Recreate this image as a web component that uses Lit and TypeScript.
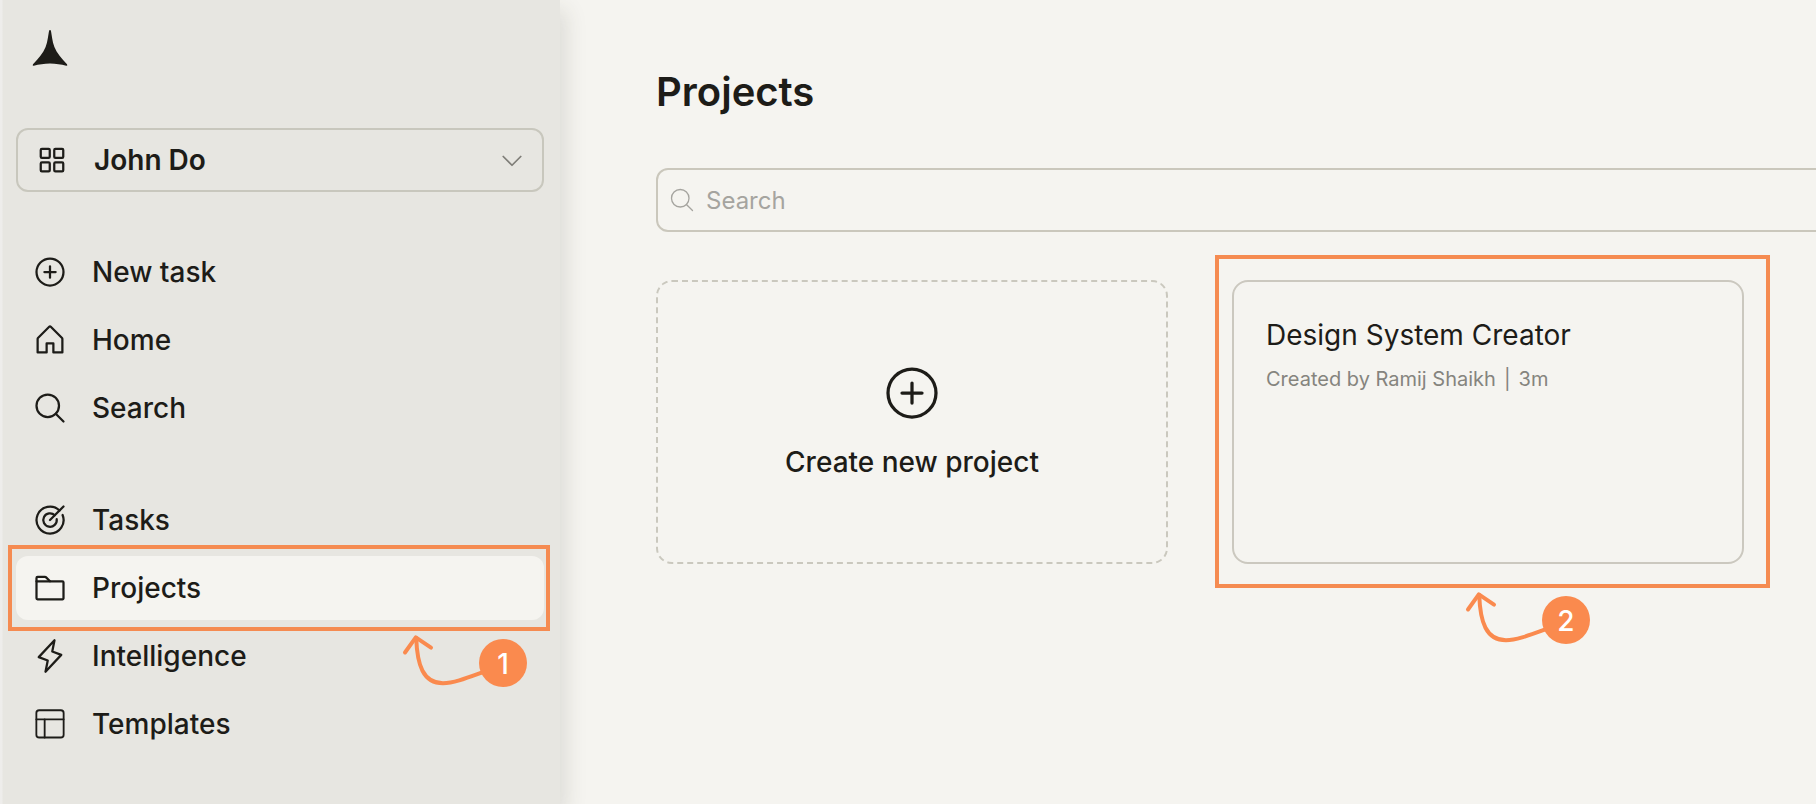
import { LitElement, html, svg, css, nothing } from "lit";
import type { SVGTemplateResult } from "lit";
import { customElement, property } from "lit/decorators.js";
import { classMap } from "lit/directives/class-map.js";

const icons: Record<string, SVGTemplateResult> = {
  squares: svg`
    <rect x="48" y="48" width="64" height="64" rx="8" />
    <rect x="144" y="48" width="64" height="64" rx="8" />
    <rect x="48" y="144" width="64" height="64" rx="8" />
    <rect x="144" y="144" width="64" height="64" rx="8" />`,
  caret: svg`<polyline points="208 96 128 176 48 96" />`,
  plus: svg`
    <circle cx="128" cy="128" r="96" />
    <line x1="88" y1="128" x2="168" y2="128" />
    <line x1="128" y1="88" x2="128" y2="168" />`,
  home: svg`<path d="M104,216V152h48v64h64V120a8,8,0,0,0-2.34-5.66l-80-80a8,8,0,0,0-11.32,0l-80,80A8,8,0,0,0,40,120v96Z" />`,
  search: svg`
    <circle cx="112" cy="112" r="80" />
    <line x1="168.57" y1="168.57" x2="224" y2="224" />`,
  target: svg`
    <line x1="128" y1="128" x2="224" y2="32" />
    <path d="M195.88,60.12A96,96,0,1,0,217.5,92.5" />
    <path d="M161.94,94.06A48,48,0,1,0,175.66,121.5" />`,
  folder: svg`
    <path d="M216.89,208H39.38A7.4,7.4,0,0,1,32,200.62V80H216a8,8,0,0,1,8,8V200.89A7.11,7.11,0,0,1,216.89,208Z" />
    <path d="M32,80V56a8,8,0,0,1,8-8H92.69a8,8,0,0,1,5.65,2.34L128,80" />`,
  bolt: svg`<polygon points="96 240 112 160 48 136 160 16 144 96 208 120 96 240" />`,
  template: svg`
    <rect x="31" y="30" width="194" height="194" rx="20" />
    <line x1="31" y1="95" x2="225" y2="95" />
    <line x1="90" y1="95" x2="90" y2="224" />`,
};

@customElement("line-icon")
export class LineIcon extends LitElement {
  @property() name = "plus";
  @property({ type: Number }) weight = 16;

  static styles = css`
    :host { display: block; flex: none; width: 36px; height: 36px; }
    svg {
      display: block; width: 100%; height: 100%; overflow: visible;
      fill: none; stroke: currentColor;
      stroke-linecap: round; stroke-linejoin: round;
    }
  `;

  render() {
    return html`<svg viewBox="0 0 256 256" stroke-width=${this.weight}>${icons[this.name]}</svg>`;
  }
}

@customElement("step-callout")
export class StepCallout extends LitElement {
  @property() step = "1";

  static styles = css`
    :host { position: relative; display: block; width: 124px; height: 52px; }
    svg {
      position: absolute; left: 0; top: 0; overflow: visible;
      fill: none; stroke: #fa8a4e; stroke-width: 4;
      stroke-linecap: round; stroke-linejoin: round;
    }
    .badge {
      position: absolute; right: 0; top: 4px; width: 48px; height: 48px;
      border-radius: 50%; background: #fa8a4e; color: #fff;
      font: 500 28px/50px Inter, sans-serif; text-align: center;
    }
  `;

  render() {
    return html`
      <svg width="124" height="52" viewBox="0 0 124 52">
        <path d="M2 17.5 L12.8 2.4 L28 12.6" />
        <path d="M13.2 3 C14.2 30 20 48.2 40 48.2 C51 48.2 64 43 82 36.5" />
      </svg>
      <div class="badge">${this.step}</div>
    `;
  }
}

interface NavItem { icon: string; label: string; active?: boolean; weight?: number; }

const groups: NavItem[][] = [
  [
    { icon: "plus", label: "New task" },
    { icon: "home", label: "Home" },
    { icon: "search", label: "Search" },
  ],
  [
    { icon: "target", label: "Tasks" },
    { icon: "folder", label: "Projects", active: true },
    { icon: "bolt", label: "Intelligence" },
    { icon: "template", label: "Templates", weight: 13 },
  ],
];

@customElement("app-root")
export class AppRoot extends LitElement {
  static styles = css`
    * { box-sizing: border-box; }
    :host {
      display: flex; width: 100%; height: 804px; overflow: hidden;
      background: #f5f4f0; color: #1d1c18;
      font-family: Inter, sans-serif; font-size: 28px; font-weight: 500;
    }
    .sidebar {
      flex: none; display: flex; flex-direction: column; gap: 48px;
      width: 560px; padding: 24px 16px 0 16px;
      background: linear-gradient(90deg, #eeedeb 0 2px, #e7e6e1 3px);
      box-shadow: 6px 10px 20px rgba(60, 58, 50, 0.13);
    }
    .logo { display: block; margin: 0 0 8px 12px; width: 44px; height: 48px; fill: #1d1c18; }
    .workspace {
      display: flex; align-items: center; gap: 24px; height: 64px; flex: none;
      padding: 0 16px; border: 2px solid #c8c7bd; border-radius: 12px;
      font-weight: 600;
    }
    .workspace .name { flex: 1; }
    .caret { width: 28px; height: 28px; color: #7f7e78; }
    .group { display: flex; flex-direction: column; gap: 4px; }
    .item {
      position: relative; display: flex; align-items: center; gap: 24px;
      height: 64px; padding: 0 16px; border-radius: 12px;
    }
    .item.active { background: #f5f4f0; }
    .frame { position: absolute; border: 4px solid #f58b51; }
    .item .frame { inset: -11px -6px -11px -8px; }
    .item step-callout { position: absolute; left: 387px; top: 79px; }
    main { flex: 1; min-width: 0; padding: 64px 0 0 96px; }
    h1 { margin: 0; font-size: 40px; line-height: 55px; font-weight: 600; }
    .field {
      display: flex; align-items: center; gap: 10px; height: 64px;
      margin: 49px -40px 48px 0; padding: 0 10px;
      border: 2px solid #cac7bc; border-radius: 12px;
      color: #a5a49f; font-size: 24px; font-weight: 400;
    }
    .field line-icon { width: 28px; height: 28px; }
    .cards { display: grid; grid-template-columns: 512px 512px; grid-auto-rows: 284px; gap: 64px; }
    .create {
      display: flex; flex-direction: column; align-items: center; gap: 20px;
      padding-top: 79px; border: 2px dashed #cac8be; border-radius: 16px;
    }
    .create line-icon { width: 64px; height: 64px; }
    .slot { position: relative; display: grid; }
    .slot .frame { inset: -25px -26px -24px -17px; }
    .slot step-callout { position: absolute; left: 234px; top: 312px; }
    .project { padding: 35px 32px; border: 2px solid #cbc8bf; border-radius: 16px; font-weight: 400; }
    .title { line-height: 36px; }
    .meta { display: flex; gap: 8px; margin-top: 12px; font-size: 20px; line-height: 28px; color: #85847e; }
  `;

  private renderItem(item: NavItem) {
    return html`
      <div class=${classMap({ item: true, active: !!item.active })}>
        <line-icon name=${item.icon} weight=${item.weight ?? 16}></line-icon>
        <span>${item.label}</span>
        ${item.active
          ? html`<div class="frame"></div><step-callout step="1"></step-callout>`
          : nothing}
      </div>
    `;
  }

  render() {
    return html`
      <aside class="sidebar">
        <svg class="logo" viewBox="28 24 44 48">
          <path d="M49.1 30.6 Q50 29.2 50.9 30.6 C51.8 35 52.2 41.5 54.4 47 C56.8 53 61.6 58.8 67 64.3 Q68 65.9 66.2 65.8 C61 64.6 56 63.6 50 63.6 C44 63.6 39 64.6 33.8 65.8 Q32 65.9 33 64.3 C38.4 58.8 43.2 53 45.6 47 C47.8 41.5 48.2 35 49.1 30.6 Z" />
        </svg>
        <div class="workspace">
          <line-icon name="squares"></line-icon>
          <span class="name">John Do</span>
          <line-icon class="caret" name="caret"></line-icon>
        </div>
        ${groups.map((g) => html`<nav class="group">${g.map((i) => this.renderItem(i))}</nav>`)}
      </aside>
      <main>
        <h1>Projects</h1>
        <div class="field">
          <line-icon name="search" weight="12"></line-icon>
          <span>Search</span>
        </div>
        <section class="cards">
          <div class="create">
            <line-icon name="plus" weight="13"></line-icon>
            <span>Create new project</span>
          </div>
          <div class="slot">
            <article class="project">
              <div class="title">Design System Creator</div>
              <div class="meta">
                <span>Created by Ramij Shaikh</span><span>|</span><span>3m</span>
              </div>
            </article>
            <div class="frame"></div>
            <step-callout step="2"></step-callout>
          </div>
        </section>
      </main>
    `;
  }
}
